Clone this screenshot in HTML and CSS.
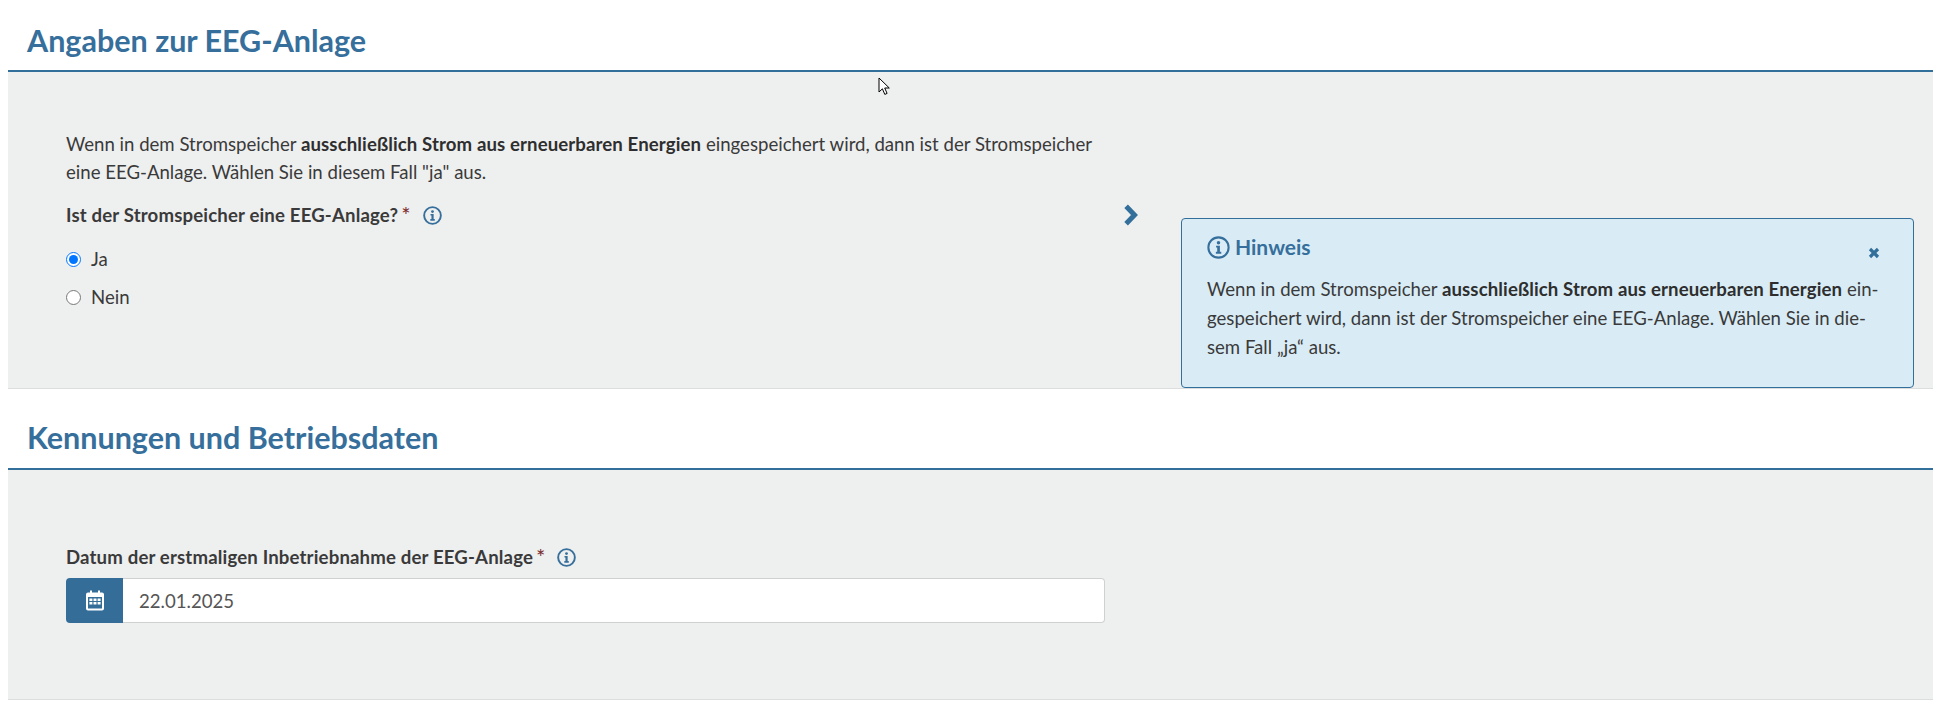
FILE: index.html
```html
<!DOCTYPE html>
<html lang="de">
<head>
    <meta charset="UTF-8">
    <title>Angaben zur EEG-Anlage</title>
    <link rel="stylesheet" href="styles.css">
</head>
<body>

<!-- Angaben zur EEG-Anlage -->
<section class="section">
    <h2 class="section-title">Angaben zur EEG-Anlage</h2>
    <div class="panel panel-split">
        <div class="panel-main">
            <p class="intro">Wenn in dem Stromspeicher <strong>ausschließlich Strom aus erneuerbaren Energien</strong> eingespeichert wird, dann ist der Stromspeicher eine EEG-Anlage. Wählen Sie in diesem Fall "ja" aus.</p>
            <div class="label-row">
                <span class="field-label">Ist der Stromspeicher eine EEG-Anlage?</span><span class="required">*</span>
                <svg class="info-icon" viewBox="0 0 20 20"><circle cx="10" cy="10" r="8.8" fill="none" stroke="currentColor" stroke-width="2"/><circle cx="10" cy="5.9" r="1.5" fill="currentColor"/><path d="M7.9 8.5h3.3v5.3h1.2v1.6H7.7v-1.6h1.2v-3.7h-1z" fill="currentColor"/></svg>
            </div>
            <label class="radio-row"><input type="radio" name="eeg" checked> Ja</label>
            <label class="radio-row"><input type="radio" name="eeg"> Nein</label>
        </div>
        <svg class="chevron" viewBox="0 0 14 22"><path d="M2.6 2.2l8.4 8.8-8.4 8.8" fill="none" stroke="currentColor" stroke-width="5"/></svg>
        <aside class="hint">
            <div class="hint-head">
                <h3 class="hint-title">
                    <svg class="hint-icon" viewBox="0 0 20 20"><circle cx="10" cy="10" r="8.8" fill="none" stroke="currentColor" stroke-width="1.8"/><circle cx="10" cy="5.9" r="1.5" fill="currentColor"/><path d="M7.9 8.5h3.3v5.3h1.2v1.6H7.7v-1.6h1.2v-3.7h-1z" fill="currentColor"/></svg>
                    Hinweis
                </h3>
                <svg class="hint-close" viewBox="0 0 12 12"><path d="M2 2l8 8M10 2l-8 8" fill="none" stroke="currentColor" stroke-width="3.2"/></svg>
            </div>
            <p class="hint-text">Wenn in dem Stromspeicher <strong>ausschließlich Strom aus erneuerbaren Energien</strong> ein-<br>gespeichert wird, dann ist der Stromspeicher eine EEG-Anlage. Wählen Sie in die-<br>sem Fall „ja“ aus.</p>
        </aside>
    </div>
</section>

<!-- Kennungen und Betriebsdaten -->
<section class="section section-next">
    <h2 class="section-title">Kennungen und Betriebsdaten</h2>
    <div class="panel panel-date">
        <div class="label-row">
            <span class="field-label">Datum der erstmaligen Inbetriebnahme der EEG-Anlage</span><span class="required">*</span>
            <svg class="info-icon" viewBox="0 0 20 20"><circle cx="10" cy="10" r="8.8" fill="none" stroke="currentColor" stroke-width="2"/><circle cx="10" cy="5.9" r="1.5" fill="currentColor"/><path d="M7.9 8.5h3.3v5.3h1.2v1.6H7.7v-1.6h1.2v-3.7h-1z" fill="currentColor"/></svg>
        </div>
        <div class="date-field">
            <span class="date-button">
                <svg class="calendar" viewBox="0 0 18 20"><path d="M4 0h2v2h6V0h2v2h2a2 2 0 0 1 2 2v14a2 2 0 0 1-2 2H2a2 2 0 0 1-2-2V4a2 2 0 0 1 2-2h2z" fill="#fff"/><path d="M2 6.5h14V18H2z" fill="#336d98"/><path d="M3.4 8h3v2.4h-3zm4.1 0h3v2.4h-3zm4.1 0h3v2.4h-3zM3.4 11.5h3v2.4h-3zm4.1 0h3v2.4h-3zm4.1 0h3v2.4h-3z" fill="#fff"/></svg>
            </span>
            <input class="date-input" type="text" value="22.01.2025">
        </div>
    </div>
</section>

<!-- Mauszeiger aus dem Screenshot -->
<svg class="cursor" viewBox="0 0 12 20"><path d="M1 1v14l3.4-3.2 2.4 5.6 2.3-1-2.4-5.4h4.6z" fill="#fff" stroke="#000" stroke-width="1"/></svg>

</body>
</html>
```

FILE: styles.css
```css
body {
    margin: 0 8px;
    font-family: 'Lato', 'Open Sans', sans-serif;
    font-size: 18.6px;
    color: #3a3a3a;
    background-color: #fff;
}

.section-next {
    margin-top: 9px;
}

.section-title {
    margin: 0;
    height: 72px;
    padding: 20px 0 0 19px;
    box-sizing: border-box;
    font-size: 30.5px;
    line-height: 40px;
    font-weight: 700;
    color: #366f9b;
    border-bottom: 2px solid #336f9b;
}

.section-next .section-title {
    padding-top: 19px;
}

.panel {
    background-color: #eeefef;
    border-bottom: 1px solid #dcdddd;
    box-sizing: border-box;
}

.panel-split {
    display: flex;
    align-items: flex-start;
    height: 317px;
    padding-left: 58px;
}

.panel-main {
    width: 1039px;
    padding-top: 58px;
}

.intro {
    margin: 0 0 15px;
    line-height: 28px;
    width: 1039px;
}

.intro strong,
.hint-text strong {
    font-weight: 700;
    letter-spacing: 0.11px;
    color: #2e2e2e;
}

.label-row {
    display: flex;
    align-items: center;
    height: 28px;
}

.field-label {
    font-weight: 700;
    letter-spacing: 0.16px;
}

.required {
    margin-left: 3px;
    font-size: 22px;
    line-height: 28px;
    color: #7a2a2a;
}

.info-icon {
    width: 19px;
    height: 19px;
    margin-left: 12px;
    color: #366f9b;
}

.radio-row {
    display: flex;
    align-items: center;
    height: 38px;
}

.radio-row:first-of-type {
    margin-top: 11px;
}

.radio-row input {
    width: 15px;
    height: 15px;
    margin: 0 10px 0 0;
}

.chevron {
    width: 15px;
    height: 22px;
    margin: 132px 0 0 18px;
    color: #336f9b;
}

.hint {
    width: 733px;
    height: 170px;
    margin: 146px 0 0 43px;
    padding: 14px 25px 0 25px;
    box-sizing: border-box;
    background-color: #d9ecf6;
    border: 1px solid #336f9b;
    border-radius: 4px;
}

.hint-head {
    display: flex;
    justify-content: space-between;
    align-items: center;
}

.hint-title {
    display: flex;
    align-items: center;
    gap: 5px;
    margin: 0;
    font-size: 21px;
    line-height: 28px;
    color: #366f9b;
}

.hint-icon {
    width: 23px;
    height: 23px;
}

.hint-close {
    width: 12px;
    height: 12px;
    margin: 11px 8px 0 0;
    color: #336f9b;
}

.hint-text {
    margin: 14px 0 0;
    line-height: 29px;
    white-space: nowrap;
}

.panel-date {
    height: 230px;
    padding: 73px 0 0 58px;
}

.date-field {
    display: flex;
    width: 1039px;
    height: 45px;
    margin-top: 7px;
}

.date-button {
    display: flex;
    align-items: center;
    justify-content: center;
    width: 57px;
    background-color: #336d98;
    border-radius: 4px 0 0 4px;
}

.calendar {
    width: 18px;
    height: 21px;
}

.date-input {
    flex: 1;
    min-width: 0;
    padding: 0 16px;
    font-family: inherit;
    font-size: 18.6px;
    color: #555;
    background-color: #fff;
    border: 1px solid #cfd0d0;
    border-left: none;
    border-radius: 0 4px 4px 0;
}

.cursor {
    position: absolute;
    left: 878px;
    top: 77px;
    width: 12px;
    height: 20px;
}
```
